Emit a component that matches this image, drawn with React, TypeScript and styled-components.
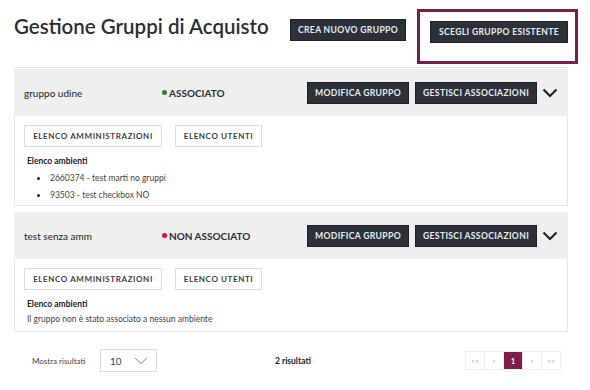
import styled, { createGlobalStyle } from 'styled-components';

const GlobalStyle = createGlobalStyle`
  body {
    margin: 0;
    background: #ffffff;
    font-family: Lato, "Open Sans", sans-serif;
    color: #222;
  }
`

const Page = styled.div`
  width: 554px;
  padding: 0 22px 0 14px;
`

const Header = styled.div`
  height: 67px;
  display: flex;
  align-items: flex-start;
  border-bottom: 1px solid #e4e4e4;
`

const Title = styled.h1`
  margin: 14px 0 0 0;
  font-size: 20.5px;
  font-weight: 600;
  color: #2b2f33;
  white-space: nowrap;
  flex: 1;
`

const DarkButton = styled.button`
  height: 22px;
  width: ${p => p.$w}px;
  padding: 0;
  background: #2b3138;
  color: #e9ecef;
  border: 1px solid #1d2126;
  font-family: Lato, sans-serif;
  font-weight: 700;
  font-size: 8.6px;
  letter-spacing: 0.35px;
  text-transform: uppercase;
  white-space: nowrap;
`

const HeaderActions = styled.div`
  display: flex;
  gap: 24px;
  margin-top: 19px;
`

const Highlight = styled.div`
  position: relative;
  &::after {
    content: '';
    position: absolute;
    left: -13px;
    top: -10px;
    right: -10px;
    bottom: -21px;
    border: 3px solid #7a1f4a;
    pointer-events: none;
  }
`

const Card = styled.div`
  margin-top: ${p => p.$first ? 1 : 6}px;
`

const CardHeader = styled.div`
  height: 47px;
  background: #efefef;
  display: flex;
  align-items: center;
  padding: 0 10px;
`

const GroupName = styled.div`
  width: 138px;
  font-size: 10px;
  color: #222;
`

const Status = styled.div`
  flex: 1;
  display: flex;
  align-items: center;
  gap: 2px;
  font-size: 10px;
  font-weight: 700;
  color: #2b2f33;
`

const Dot = styled.span`
  width: 5px;
  height: 5px;
  border-radius: 50%;
  background: ${p => p.$color};
`

const HeaderButtons = styled.div`
  display: flex;
  gap: 6px;
  align-items: center;
`

const Chevron = styled.svg`
  margin-left: 5px;
  width: 16px;
  height: 10px;
`

const CardBody = styled.div`
  border: 1px solid #e6e6e6;
  border-top: none;
  padding: 9px 9px 0 9px;
  height: ${p => p.$h}px;
  box-sizing: border-box;
`

const OutlineRow = styled.div`
  display: flex;
  gap: 13px;
`

const OutlineButton = styled.button`
  height: 22px;
  width: ${p => p.$w}px;
  padding: 0;
  background: #fff;
  color: #3a3f44;
  border: 1px solid #dcdcdc;
  font-family: Lato, sans-serif;
  font-weight: 700;
  font-size: 8px;
  letter-spacing: 0.6px;
  white-space: nowrap;
`

const SectionLabel = styled.div`
  margin: 9px 0 0 3px;
  font-size: 8.5px;
  font-weight: 700;
  color: #222;
`

const List = styled.ul`
  margin: 3px 0 0 0;
  padding: 0 0 0 26px;
  font-size: 8.5px;
  color: #444;
  li {
    line-height: 16px;
  }
  li::marker {
    color: #222;
    font-size: 10px;
  }
`

const EmptyText = styled.div`
  margin: 5px 0 0 3px;
  font-size: 8.5px;
  color: #444;
`

const Footer = styled.div`
  display: flex;
  align-items: center;
  margin-top: 17px;
  padding-left: 18px;
`

const SmallLabel = styled.div`
  font-size: 8px;
  color: #444;
  width: 68px;
`

const Select = styled.div`
  height: 23px;
  border: 1px solid #dcdcdc;
  display: flex;
  align-items: center;
  justify-content: space-between;
  padding: 0 8px 0 9px;
  box-sizing: border-box;
  width: 57px;
  font-size: 10px;
  color: #444;
`

const Count = styled.div`
  margin-left: 118px;
  flex: 1;
  font-size: 8.5px;
  font-weight: 700;
  color: #222;
`

const Pager = styled.div`
  display: flex;
  margin-right: 7px;
  border: 1px solid #eee;
`

const PageCell = styled.div`
  width: 18px;
  height: 17px;
  display: flex;
  align-items: center;
  justify-content: center;
  font-size: 7px;
  color: ${p => p.$active ? '#fff' : '#aaa'};
  background: ${p => p.$active ? '#7d1d4c' : '#fff'};
  border-left: 1px solid #eee;
  &:first-child { border-left: none; }
  font-weight: ${p => p.$active ? 700 : 400};
`

const ChevronIcon = () => (
  <Chevron viewBox="0 0 16 10">
    <path d="M1.5 1.5 L8 8 L14.5 1.5" fill="none" stroke="#222" strokeWidth="2.2" />
  </Chevron>
)

type Group = { name: string; associated: boolean; ambienti: string[] }

const groups: Group[] = [
  { name: 'gruppo udine', associated: true, ambienti: ['2660374 - test marti no gruppi', '93503 - test checkbox NO'] },
  { name: 'test senza amm', associated: false, ambienti: [] },
]

export default function App() {
  return <>
    <GlobalStyle />
    <Page>
      <Header>
        <Title>Gestione Gruppi di Acquisto</Title>
        <HeaderActions>
          <DarkButton $w={116}>Crea nuovo gruppo</DarkButton>
          <Highlight>
            <DarkButton $w={138}>Scegli gruppo esistente</DarkButton>
          </Highlight>
        </HeaderActions>
      </Header>

      {groups.map((g, i) => (
        <Card key={g.name} $first={i === 0}>
          <CardHeader>
            <GroupName>{g.name}</GroupName>
            <Status>
              <Dot $color={g.associated ? '#1f8a2e' : '#e3102d'} />
              {g.associated ? 'ASSOCIATO' : 'NON ASSOCIATO'}
            </Status>
            <HeaderButtons>
              <DarkButton $w={102}>Modifica gruppo</DarkButton>
              <DarkButton $w={122}>Gestisci associazioni</DarkButton>
            </HeaderButtons>
            <ChevronIcon />
          </CardHeader>
          <CardBody $h={g.ambienti.length ? 90 : 73}>
            <OutlineRow>
              <OutlineButton $w={138}>ELENCO AMMINISTRAZIONI</OutlineButton>
              <OutlineButton $w={87}>ELENCO UTENTI</OutlineButton>
            </OutlineRow>
            <SectionLabel>Elenco ambienti</SectionLabel>
            {g.ambienti.length ? (
              <List>
                {g.ambienti.map(a => <li key={a}>{a}</li>)}
              </List>
            ) : (
              <EmptyText>Il gruppo non è stato associato a nessun ambiente</EmptyText>
            )}
          </CardBody>
        </Card>
      ))}

      <Footer>
        <SmallLabel>Mostra risultati</SmallLabel>
        <Select>
          10
          <svg width="14" height="8" viewBox="0 0 14 8">
            <path d="M1 1 L7 6.5 L13 1" fill="none" stroke="#888" strokeWidth="1" />
          </svg>
        </Select>
        <Count>2 risultati</Count>
        <Pager>
          <PageCell>&lt;&lt;</PageCell>
          <PageCell>&lt;</PageCell>
          <PageCell $active>1</PageCell>
          <PageCell>&gt;</PageCell>
          <PageCell>&gt;&gt;</PageCell>
        </Pager>
      </Footer>
    </Page>
  </>
}
